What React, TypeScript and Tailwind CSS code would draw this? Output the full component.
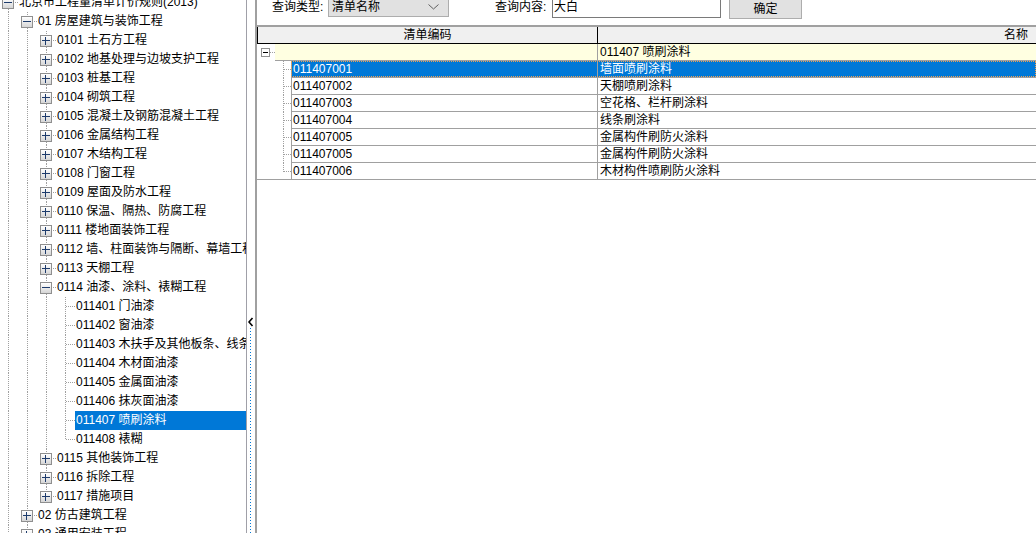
import React from 'react'

type TreeNode = {
  code: string
  name: string
  children?: TreeNode[]
  open?: boolean
  selected?: boolean
}

type FlatRow = {
  node: TreeNode
  guides: boolean[]
  last: boolean
}

const VDOT = 'bg-[repeating-linear-gradient(to_bottom,#a0a0a0_0_1px,transparent_1px_2px)]'
const HDOT = 'bg-[repeating-linear-gradient(to_right,#a0a0a0_0_1px,transparent_1px_2px)]'

const collapsed = (code: string, name: string): TreeNode => ({ code, name, children: [] })
const leaf = (code: string, name: string, selected = false): TreeNode => ({ code, name, selected })

const tree: TreeNode[] = [
  {
    code: '',
    name: '北京市工程量清单计价规则(2013)',
    open: true,
    children: [
      {
        code: '01',
        name: '房屋建筑与装饰工程',
        open: true,
        children: [
          collapsed('0101', '土石方工程'),
          collapsed('0102', '地基处理与边坡支护工程'),
          collapsed('0103', '桩基工程'),
          collapsed('0104', '砌筑工程'),
          collapsed('0105', '混凝土及钢筋混凝土工程'),
          collapsed('0106', '金属结构工程'),
          collapsed('0107', '木结构工程'),
          collapsed('0108', '门窗工程'),
          collapsed('0109', '屋面及防水工程'),
          collapsed('0110', '保温、隔热、防腐工程'),
          collapsed('0111', '楼地面装饰工程'),
          collapsed('0112', '墙、柱面装饰与隔断、幕墙工程'),
          collapsed('0113', '天棚工程'),
          {
            code: '0114',
            name: '油漆、涂料、裱糊工程',
            open: true,
            children: [
              leaf('011401', '门油漆'),
              leaf('011402', '窗油漆'),
              leaf('011403', '木扶手及其他板条、线条油漆'),
              leaf('011404', '木材面油漆'),
              leaf('011405', '金属面油漆'),
              leaf('011406', '抹灰面油漆'),
              leaf('011407', '喷刷涂料', true),
              leaf('011408', '裱糊'),
            ],
          },
          collapsed('0115', '其他装饰工程'),
          collapsed('0116', '拆除工程'),
          collapsed('0117', '措施项目'),
        ],
      },
      collapsed('02', '仿古建筑工程'),
      collapsed('03', '通用安装工程'),
    ],
  },
]

// lists that continue below the visible area
const continued = new Set<TreeNode[]>([tree, tree[0].children!])

function flatten(nodes: TreeNode[], guides: boolean[], out: FlatRow[]) {
  nodes.forEach((node, i) => {
    const last = i === nodes.length - 1 && !continued.has(nodes)
    out.push({ node, guides, last })
    if (node.open && node.children) flatten(node.children, [...guides, !last], out)
  })
  return out
}

const rows = flatten(tree, [], [])

function Expander({ open }: { open: boolean }) {
  return (
    <div className="absolute left-[3px] top-[4px] w-[12px] h-[12px] border border-[#8f8f8f] bg-linear-to-b from-white to-[#d6d6d6]">
      <svg width="10" height="10" className="block">
        <path d="M1 4.5h8" stroke="#1d3b6c" strokeWidth="1" />
        {!open && <path d="M4.5 1v8" stroke="#1d3b6c" strokeWidth="1" />}
      </svg>
    </div>
  )
}

function TreeRow({ row }: { row: FlatRow }) {
  const { node, guides, last } = row
  const hasChildren = !!node.children
  return (
    <div className="flex h-[19px] leading-[19px]">
      {guides.map((g, i) => (
        <div key={i} className="relative w-[19px] shrink-0">
          {g && <div className={`absolute left-[9px] top-0 bottom-0 w-px ${VDOT}`} />}
        </div>
      ))}
      <div className="relative w-[19px] shrink-0">
        <div className={`absolute left-[9px] top-0 w-px ${last ? 'h-[10px]' : 'bottom-0'} ${VDOT}`} />
        <div className={`absolute left-[10px] right-0 top-[9px] h-px ${HDOT}`} />
        {hasChildren && <Expander open={!!node.open} />}
      </div>
      <div
        className={`flex-1 min-w-0 whitespace-nowrap overflow-hidden pl-px ${
          node.selected ? 'bg-[#0078d7] text-white' : ''
        }`}
      >
        {node.code ? `${node.code} ${node.name}` : node.name}
      </div>
    </div>
  )
}

const items = [
  { code: '011407001', name: '墙面喷刷涂料' },
  { code: '011407002', name: '天棚喷刷涂料' },
  { code: '011407003', name: '空花格、栏杆刷涂料' },
  { code: '011407004', name: '线条刷涂料' },
  { code: '011407005', name: '金属构件刷防火涂料' },
  { code: '011407005', name: '金属构件刷防火涂料' },
  { code: '011407006', name: '木材构件喷刷防火涂料' },
]

export default function App() {
  return (
    <div className="flex w-[1036px] h-[533px] overflow-hidden bg-white text-black text-[12px] font-['Liberation_Sans','Noto_Sans_CJK_SC',sans-serif]">
      {/* Tree */}
      <div className="w-[247px] shrink-0 overflow-hidden border-r border-[#a0a0a8]">
        <div className="mt-[-7px] ml-[-1px]">
          {rows.map((r, i) => (
            <TreeRow key={i} row={r} />
          ))}
        </div>
      </div>

      {/* Splitter */}
      <div className="relative w-[8px] shrink-0">
        <svg width="6" height="10" className="absolute left-[1px] top-[317px]">
          <polyline points="4.5,1 1,5 4.5,9" fill="none" stroke="#000" strokeWidth="1.6" />
        </svg>
        <div className="absolute left-[3px] top-[328px] bottom-0 w-px bg-[repeating-linear-gradient(to_bottom,#0078d7_0_1px,transparent_1px_3px)]" />
      </div>
      <div className="w-[2px] shrink-0 bg-[#a0a0a0]" />

      {/* Query + grid */}
      <div className="flex-1 min-w-0 overflow-hidden flex flex-col">
        <div className="h-[25px] shrink-0 flex items-start pl-[15px] whitespace-nowrap">
          <div className="w-[56px] mt-[-3px] leading-[20px]">查询类型:</div>
          <div className="w-[121px] h-[21px] mt-[-4px] border border-[#adadad] bg-[#e1e1e1] flex items-center pl-[3px]">
            <span className="flex-1">清单名称</span>
            <svg width="11" height="6" className="mr-[9px]">
              <polyline points="0.5,0.5 5.5,5 10.5,0.5" fill="none" stroke="#606060" strokeWidth="1" />
            </svg>
          </div>
          <div className="ml-[46px] w-[57px] mt-[-3px] leading-[20px]">查询内容:</div>
          <div className="w-[169px] h-[21px] mt-[-3px] border border-[#7a7a7a] bg-white pl-px leading-[19px]">大白</div>
          <div className="ml-[8px] w-[73px] h-[21px] mt-[-2px] border border-[#adadad] bg-[#e1e1e1] flex items-center justify-center">
            确定
          </div>
        </div>

        {/* Header */}
        <div className="h-[19px] shrink-0 flex border-t-2 border-b border-t-[#a0a0a0] border-b-black bg-[#f0f0f0] leading-[16px]">
          <div className="w-[340px] shrink-0 border-l border-black text-center">清单编码</div>
          <div className="flex-1 border-l border-black flex justify-end pr-[8px]">名称</div>
        </div>

        {/* Group row */}
        <div className="h-[17px] shrink-0 flex leading-[16px]">
          <div className="relative w-[18px] shrink-0">
            <div className="absolute left-[4px] top-[4px] w-[9px] h-[9px] border border-[#919191] bg-white">
              <svg width="7" height="7" className="block">
                <path d="M1 3.5h5" stroke="#000" strokeWidth="1" />
              </svg>
            </div>
            <div className={`absolute left-[13px] right-0 top-[8px] h-px ${HDOT}`} />
          </div>
          <div className="flex-1 flex bg-[#ffffe1] border-b border-[#a0a0a0]">
            <div className="w-[322px] shrink-0" />
            <div className="flex-1 border-l border-[#a0a0a0] pl-[2px]">011407 喷刷涂料</div>
          </div>
        </div>

        {/* Item rows */}
        {items.map((it, i) => {
          const sel = i === 0
          const lastRow = i === items.length - 1
          return (
            <div key={i} className="relative h-[17px] shrink-0 flex leading-[16px] whitespace-nowrap">
              <div className={`relative w-[34px] shrink-0 ${lastRow ? 'border-b border-[#a0a0a0]' : ''}`}>
                <div className={`absolute left-[26px] top-0 w-px ${lastRow ? 'h-[9px]' : 'bottom-0'} ${VDOT}`} />
                <div className={`absolute left-[27px] right-0 top-[8px] h-px ${HDOT}`} />
              </div>
              <div
                className={`w-[306px] shrink-0 border-l border-b border-[#a0a0a0] pl-[1px] ${
                  sel ? 'bg-[#0078d7] text-white' : ''
                }`}
              >
                {it.code}
              </div>
              <div
                className={`flex-1 border-l border-b border-[#a0a0a0] pl-[2px] ${
                  sel ? 'bg-[#0078d7] text-white' : ''
                }`}
              >
                {it.name}
              </div>
              {sel && (
                <div className="absolute left-[34px] right-0 top-0 bottom-px border border-dotted border-[#f0a050] pointer-events-none" />
              )}
            </div>
          )
        })}
        <div className="flex-1" />
      </div>
    </div>
  )
}
